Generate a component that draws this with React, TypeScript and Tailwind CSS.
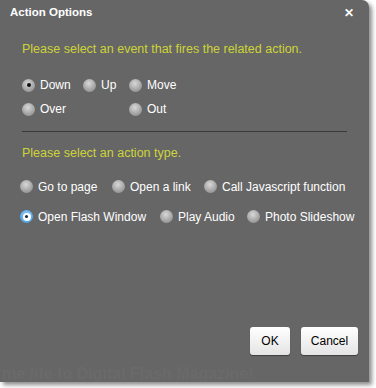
import React from "react";

function Radio({ checked, blue }: { checked?: boolean; blue?: boolean }) {
  if (blue) {
    return (
      <span className="relative flex h-[13px] w-[13px] shrink-0 items-center justify-center rounded-full bg-[radial-gradient(circle_at_50%_40%,#9fd8ff,#2f8fd8)]">
        <span className="flex h-[8px] w-[8px] items-center justify-center rounded-full bg-white">
          <span className="h-[3px] w-[3px] rounded-full bg-[#1a2a3a]" />
        </span>
      </span>
    );
  }
  return (
    <span className="flex h-[13px] w-[13px] shrink-0 items-center justify-center rounded-full bg-[radial-gradient(circle_at_45%_35%,#d8d8d8,#a2a2a2_60%,#8a8a8a)]">
      {checked && <span className="h-[4px] w-[4px] rounded-full bg-[#111]" />}
    </span>
  );
}

function Option({ label, checked, blue, className }: { label: string; checked?: boolean; blue?: boolean; className?: string }) {
  return (
    <div className={"flex items-center gap-[5px] " + (className ?? "")}>
      <Radio checked={checked} blue={blue} />
      <span className="text-[12px] leading-none text-white">{label}</span>
    </div>
  );
}

export default function App() {
  return (
    <div className="h-[388px] w-[376px] bg-white" style={{ fontFamily: '"Liberation Sans", Arial, sans-serif' }}>
      <div className="relative h-[382px] w-[369px] overflow-hidden rounded-tr-[7px] bg-[#666666] shadow-[3px_3px_4px_rgba(0,0,0,0.45)]">
        <div className="absolute left-[2px] top-[362px] text-[16px] font-bold text-[#6a6a6a]">me life to Digital Flash Magazine!</div>
        <div className="relative flex h-full flex-col">
          <div className="flex h-[26px] items-center justify-between pl-[10px] pr-[15px]">
            <span className="text-[11.5px] font-bold text-white">Action Options</span>
            <span className="text-[12px] font-bold leading-none text-white">✕</span>
          </div>
          <div className="mt-[17px] pl-[22px] text-[12.5px] leading-none text-[#cdd43a]">Please select an event that fires the related action.</div>
          <div className="mt-[23px] flex flex-col gap-[11px] pl-[22px]">
            <div className="flex">
              <Option label="Down" checked className="w-[61px]" />
              <Option label="Up" className="w-[46px]" />
              <Option label="Move" />
            </div>
            <div className="flex">
              <Option label="Over" className="w-[107px]" />
              <Option label="Out" />
            </div>
          </div>
          <div className="mx-[22px] mt-[15px] h-px bg-[#3a3a3a]" />
          <div className="mt-[15px] pl-[22px] text-[12.5px] leading-none text-[#cdd43a]">Please select an action type.</div>
          <div className="mt-[21px] flex flex-col gap-[17px] pl-[20px]">
            <div className="flex">
              <Option label="Go to page" className="w-[92px]" />
              <Option label="Open a link" className="w-[92px]" />
              <Option label="Call Javascript function" />
            </div>
            <div className="flex">
              <Option label="Open Flash Window" blue className="w-[140px]" />
              <Option label="Play Audio" className="w-[87px]" />
              <Option label="Photo Slideshow" />
            </div>
          </div>
          <div className="mt-auto mb-[27px] flex justify-end gap-[11px] pr-[11px]">
            <button className="h-[28px] w-[40px] rounded-[3px] bg-[linear-gradient(#ffffff,#e4e4e4)] text-[12px] text-black shadow-[0_1px_1px_rgba(0,0,0,0.4)]">OK</button>
            <button className="h-[28px] w-[57px] rounded-[3px] bg-[linear-gradient(#ffffff,#e4e4e4)] text-[12px] text-black shadow-[0_1px_1px_rgba(0,0,0,0.4)]">Cancel</button>
          </div>
        </div>
      </div>
    </div>
  );
}
